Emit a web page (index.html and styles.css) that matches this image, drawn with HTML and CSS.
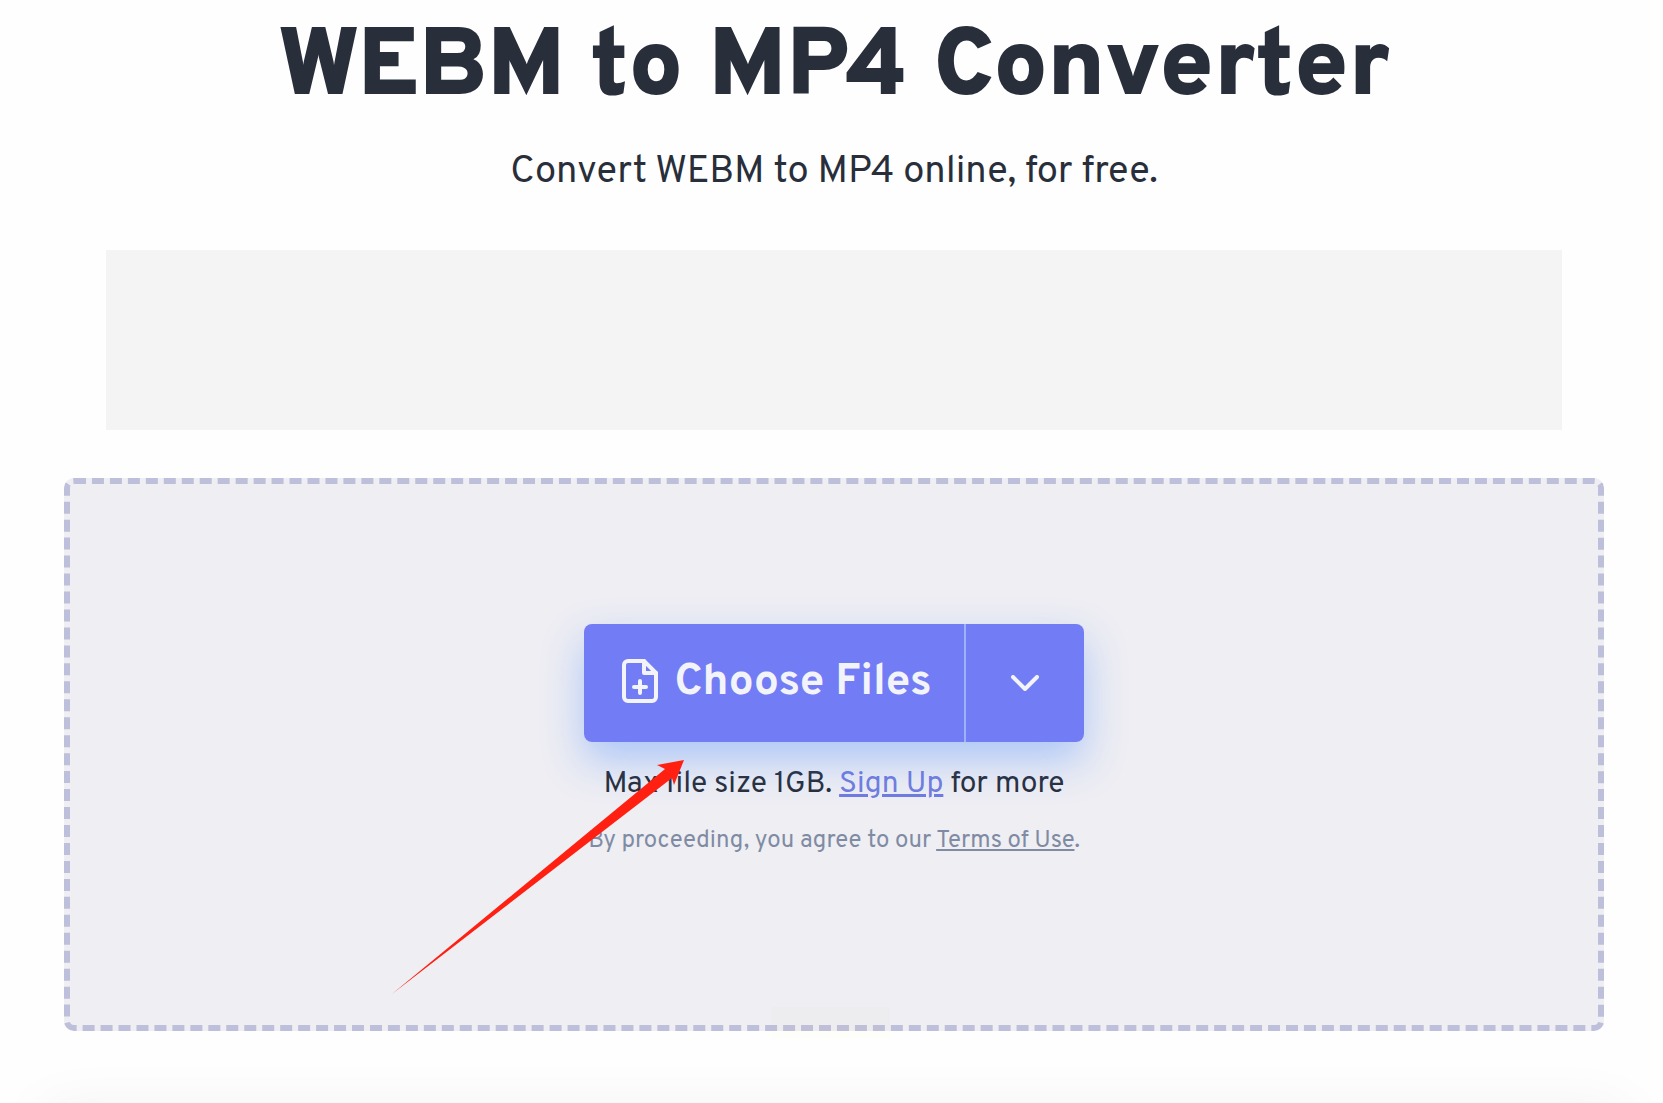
FILE: index.html
```html
<!DOCTYPE html>
<html lang="en">
<head>
<meta charset="utf-8">
<meta name="viewport" content="width=device-width, initial-scale=1">
<title>WEBM to MP4 Converter</title>
<link rel="stylesheet" href="styles.css">
</head>
<body>
<main class="page">
  <header class="intro">
    <h1 class="title">WEBM to MP4 Converter</h1>
    <p class="subtitle">Convert WEBM to MP4 online, for free.</p>
  </header>
  <aside class="banner" aria-label="Banner"></aside>
  <section class="dropzone">
    <div class="picker">
      <button class="choose" type="button">
        <svg class="file-icon" viewBox="0 0 36 48" aria-hidden="true">
          <path d="M6 2h16l12 12v24a4 4 0 0 1-4 4H6a4 4 0 0 1-4-4V6a4 4 0 0 1 4-4z"/>
          <path d="M22 2v12h12M18 22v12M12 28h12"/>
        </svg>
        Choose Files
      </button>
      <button class="more" type="button" aria-label="More sources">
        <svg class="chevron" viewBox="0 0 28 16" aria-hidden="true"><path d="M2 2l12 12L26 2"/></svg>
      </button>
      <svg class="arrow" viewBox="0 0 292 234" aria-hidden="true"><path d="M0 234L273 9L265 5L292 0L282 25L280 18Z"/></svg>
    </div>
    <p class="limit">Max file size 1GB. <a class="signup" href="#">Sign Up</a> for more</p>
    <p class="terms">By proceeding, you agree to our <a class="terms-link" href="#">Terms of Use</a>.</p>
  </section>
  <div class="next-card"></div>
</main>
</body>
</html>
```
FILE: styles.css
```css
* {
  box-sizing: border-box;
}

body {
  margin: 0;
  background: #fefefe;
  color: #292e3b;
  font-family: Overpass, Roboto, "Liberation Sans", sans-serif;
}

.page {
  display: flex;
  flex-direction: column;
  min-height: 100vh;
  padding: 12px 59px 0 64px;
  overflow: hidden;
}

.intro {
  text-align: center;
}

.title {
  margin: 0;
  font-size: 96px;
  font-weight: 900;
  line-height: 116px;
}

.subtitle {
  margin: 21px 0 0;
  font-size: 38px;
  line-height: 48px;
}

.banner {
  height: 180px;
  margin: 53px 42px 48px;
  background: #f4f4f4;
}

.dropzone {
  position: relative;
  display: flex;
  flex-direction: column;
  align-items: center;
  padding: 140px 20px 168px;
  border: 6px dashed #bebfda;
  border-radius: 10px;
  background: #eeeef3;
}

/* Faint status patch over the lower edge of the drop zone */
.dropzone::after {
  content: "";
  position: absolute;
  bottom: -14px;
  left: 50%;
  width: 118px;
  height: 32px;
  margin-left: -62px;
  background: rgba(236, 236, 150, 0.04);
}

.picker {
  position: relative;
  display: flex;
  border-radius: 8px;
  box-shadow: 0 18px 40px rgba(64, 132, 255, 0.38);
}

.choose,
.more {
  display: flex;
  align-items: center;
  justify-content: center;
  height: 118px;
  border: 0;
  background: #727cf5;
  color: #f3f3fa;
  font: inherit;
}

.choose {
  gap: 16px;
  padding: 0 32px 0 38px;
  border-radius: 8px 0 0 8px;
  font-size: 44px;
  font-weight: 700;
}

.more {
  width: 120px;
  border-left: 2px solid #9bb3f4;
  border-radius: 0 8px 8px 0;
}

.file-icon,
.chevron {
  fill: none;
  stroke: currentColor;
  stroke-width: 4;
  stroke-linecap: round;
  stroke-linejoin: round;
}

.file-icon {
  width: 36px;
  height: 48px;
}

.chevron {
  width: 28px;
  height: 16px;
}

.arrow {
  position: absolute;
  top: 136px;
  left: -192px;
  width: 292px;
  height: 234px;
  fill: #ff2012;
  pointer-events: none;
}

.limit {
  margin: 25px 0 0;
  font-size: 30px;
  line-height: 36px;
}

.signup {
  color: #727cdf;
}

.terms {
  margin: 22px 0 0;
  color: #7f8ba3;
  font-size: 24px;
  line-height: 32px;
}

.terms-link {
  color: inherit;
}

.next-card {
  height: 1px;
  margin-top: auto;
  margin-bottom: -1px;
  box-shadow: 0 30px 60px 20px rgba(0, 0, 0, 0.07);
}
```
